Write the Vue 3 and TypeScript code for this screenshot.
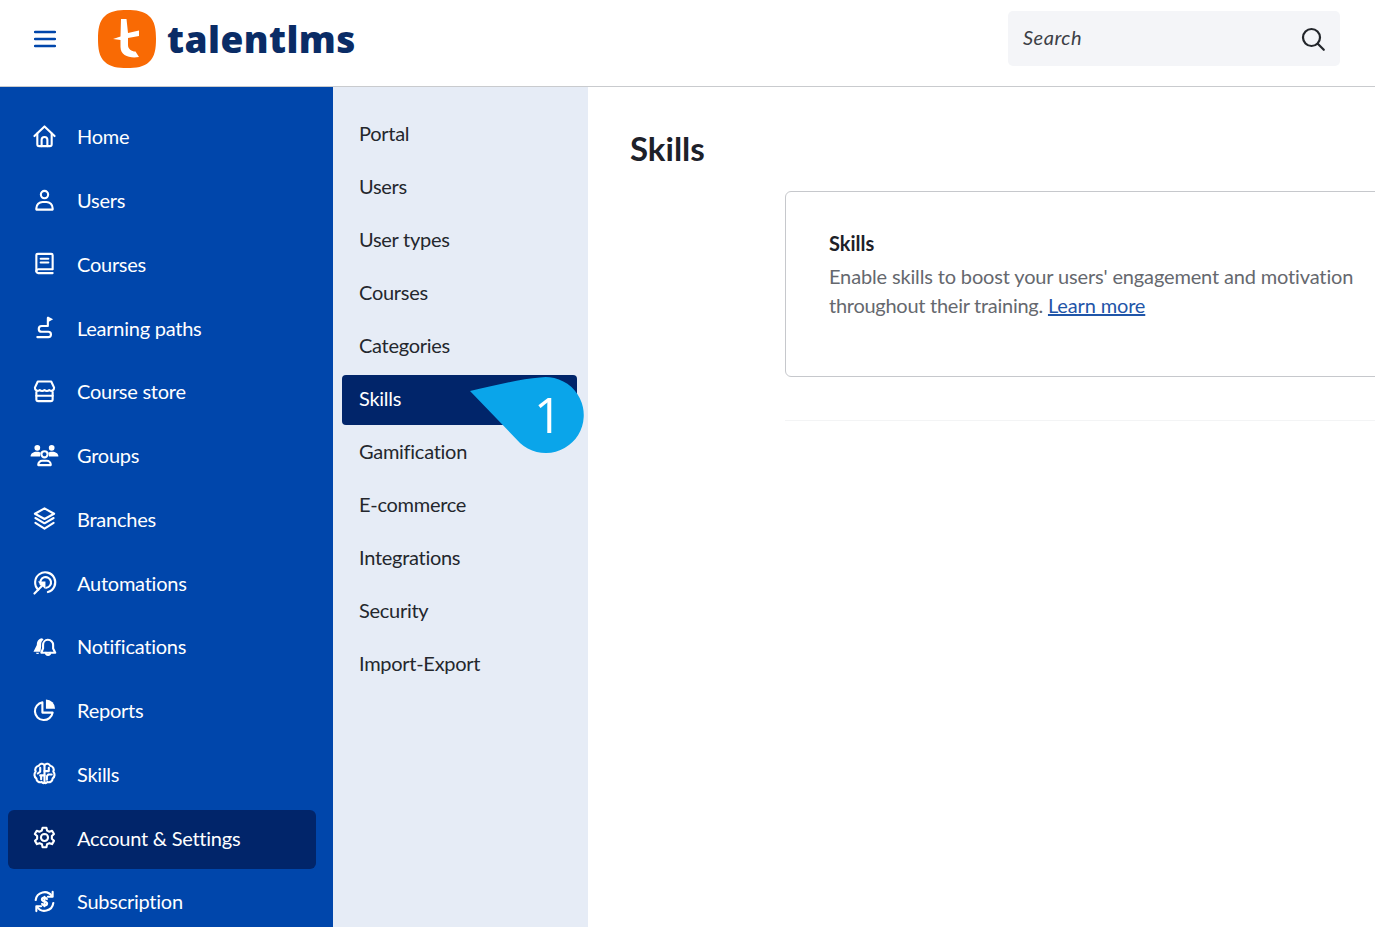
<script setup lang="ts">
interface NavItem { label: string; paths: string[]; fills?: string[]; active?: boolean }

const nav: NavItem[] = [
  { label: 'Home', paths: ['M1.5 11.5 12 1.5l10.5 10', 'M4.5 9v11a2 2 0 0 0 2 2h11a2 2 0 0 0 2-2V9', 'M9 22v-6.500a3 3 0 0 1 6 0V22'] },
  { label: 'Users', paths: ['M12 2a3.800 3.800 0 1 0 0 7.600A3.800 3.800 0 0 0 12 2Z', 'M3.500 21.500v-1.500a6.500 6.500 0 0 1 6.500-6.500h4a6.500 6.500 0 0 1 6.500 6.500v1.500Z'] },
  { label: 'Courses', paths: ['M20 18H6a2.200 2.200 0 0 0-2.500 2.200A1.800 1.800 0 0 0 5.300 22H20.500', 'M3.500 20V3.500A1.500 1.500 0 0 1 5 2h14a1.500 1.500 0 0 1 1.500 1.500V18', 'M8 7h8M8 11h8'] },
  { label: 'Learning paths', paths: ['M15.500 2v8.500H9a3 3 0 0 0 0 6h7a2.700 2.700 0 0 1 0 5.500H4.500'], fills: ['M15.500 0.500 21 3.500l-5.500 3Z'] },
  { label: 'Course store', paths: ['M5 1.500h14l3 6.500a3 3 0 0 1-5 2.500 3.500 3.500 0 0 1-5 0 3.500 3.500 0 0 1-5 0 3 3 0 0 1-5-2.500Z', 'M3.500 12.500v7.500a2 2 0 0 0 2 2h13a2 2 0 0 0 2-2v-7.500', 'M3.500 16.500h17'] },
  { label: 'Groups', paths: ['M12 7.500a3.200 3.200 0 1 0 0 6.400 3.200 3.200 0 0 0 0-6.400Z', 'M5.500 22v-.5a4 4 0 0 1 4-4h5a4 4 0 0 1 4 4v.5Z'], fills: ['M4.500 1a3 3 0 1 1 0 6 3 3 0 0 1 0-6Z', 'M19.500 1a3 3 0 1 1 0 6 3 3 0 0 1 0-6Z', 'M-2.500 13c0-3.500 3-5 6.500-5 1.800 0 3.300.4 4.200 1.200A5.500 5.500 0 0 0 7.400 13Z', 'M26.500 13c0-3.500-3-5-6.500-5-1.800 0-3.300.4-4.200 1.200A5.500 5.500 0 0 1 16.600 13Z'] },
  { label: 'Branches', paths: ['M12 1.500 22 7l-10 5.500L2 7Z', 'M2.500 11.500 12 17l9.500-5.500', 'M2.500 16.500 12 22.500l9.500-6'] },
  { label: 'Automations', paths: ['M5.500 19.500A10.500 10.500 0 1 1 15.500 22', 'M8 14a5.600 5.600 0 1 1 6 3.500', 'M1.500 23.500 9.500 15.500'], fills: ['M13 11v8l-8-8Z'] },
  { label: 'Notifications', paths: ['M15.500 5c-3 0-5 2.500-5 5.500V14l-1.800 4.500h14.500L21 14v-3.500c0-3-2.500-5.500-5.500-5.500Z', 'M13.500 18.500a2.200 2.200 0 0 0 4.400 0'], fills: ['M9.500 3.500C5.500 4 4 7 4 10.500L.5 17.500H7.800L8.500 12V9.500C8.500 7.500 9.500 6 11 5Z', 'M3 18.500h3.500a1.800 1.800 0 0 1-3.500 0Z'] },
  { label: 'Reports', paths: ['M9.800 3.500a9.300 9.300 0 1 0 10.700 10.700H9.800Z'], fills: ['M13.500 0.500a9.500 9.500 0 0 1 9.500 9.800h-9.500Z'] },
  { label: 'Skills', paths: ['M12 3C10 1 7 1.500 6 4 3 4.500 1.500 7.500 2.800 10 1 12 1 15.500 3.500 17 3.500 20 6.500 22 9 20.800 10 22 11 22.300 12 21.500', 'M12 3C14 1 17 1.500 18 4 21 4.500 22.500 7.500 21.200 10 23 12 23 15.500 20.500 17 20.500 20 17.500 22 15 20.800 14 22 13 22.300 12 21.500', 'M12 3v18.500', 'M7.500 6v4l-2.500 2M7.500 14H12M8.500 14v4M16.500 6v3.500H12M19.500 13h-3.500l-1.500 1.800v3.700'] },
  { label: 'Account & Settings', active: true, paths: ['M10 1.800h4l.7 3 2.400 1.200 2.800-1 2 3.400-2.200 2.100v2.900l2.200 2.100-2 3.400-2.800-1-2.400 1.200-.7 3h-4l-.7-3-2.400-1.200-2.800 1-2-3.400 2.200-2.100v-2.900L1.900 8.400l2-3.400 2.800 1 2.400-1.200Z', 'M12 8.300a3.700 3.700 0 1 0 0 7.400 3.700 3.700 0 0 0 0-7.400Z'] },
  { label: 'Subscription', paths: ['M2.800 10.500A9.300 9.300 0 0 1 19.800 6.500', 'M21.200 13.500A9.300 9.300 0 0 1 4.200 17.500', 'M20.500 2v5H15.500M3.500 22v-5H8.500', 'M14.500 9.500c-.5-.9-1.500-1.500-2.500-1.500-1.500 0-2.700.8-2.700 2 0 2.600 5.400 1.400 5.400 4 0 1.200-1.200 2-2.700 2-1 0-2-.6-2.500-1.500M12 7v10'] },
]

const sub: { label: string; active?: boolean }[] = [
  { label: 'Portal' }, { label: 'Users' }, { label: 'User types' }, { label: 'Courses' },
  { label: 'Categories' }, { label: 'Skills', active: true }, { label: 'Gamification' },
  { label: 'E-commerce' }, { label: 'Integrations' }, { label: 'Security' }, { label: 'Import-Export' },
]
</script>

<template>
  <div class="page">
    <header class="topbar">
      <div class="brand">
        <svg class="burger" viewBox="0 0 22 18" aria-hidden="true">
          <path d="M1 2h20M1 9h20M1 16h20" />
        </svg>
        <svg class="mark" viewBox="0 0 58 58" aria-hidden="true">
          <path class="mark-bg" d="M29 0C38 0 46 1 51 6 57 11 58 20 58 29 58 38 57 47 51 52 46 57 38 58 29 58 20 58 12 57 7 52 1 47 0 38 0 29 0 20 1 11 7 6 12 1 20 0 29 0Z" />
          <path class="mark-t" d="M23 9h5.500L30 23l11-2.500V26L30 28v7c0 4 3.500 6.500 7.500 6.500L41 47c-9 1.500-18.500-1-18.500-10v-7L15 29l7.500-2.500Z" />
        </svg>
        <span class="wordmark">talentlms</span>
      </div>
      <div class="search">
        <span class="search-label">Search</span>
        <svg class="search-icon" viewBox="0 0 24 24" aria-hidden="true">
          <circle cx="10.500" cy="10.500" r="8.500" />
          <path d="m16.800 16.800 6 6" />
        </svg>
      </div>
    </header>

    <div class="body">
      <nav class="side">
        <a v-for="item in nav" :key="item.label" class="side-item" :class="{ on: item.active }">
          <svg class="side-icon" viewBox="0 0 24 24" aria-hidden="true">
            <path v-for="d in item.paths" :key="d" :d="d" />
            <path v-for="d in item.fills ?? []" :key="d" :d="d" class="solid" />
          </svg>
          <span>{{ item.label }}</span>
        </a>
      </nav>

      <aside class="subnav">
        <a v-for="item in sub" :key="item.label" class="sub-item" :class="{ on: item.active }">{{ item.label }}</a>
        <div class="callout">
          <svg viewBox="0 0 116 80" aria-hidden="true">
            <path d="M0 15C22 10 50 3 70 1.500A38 38 0 1 1 50 67Z" />
          </svg>
          <span class="callout-num">1</span>
        </div>
      </aside>

      <main class="content">
        <h1 class="title">Skills</h1>
        <section class="card">
          <h2 class="card-title">Skills</h2>
          <p class="card-text">Enable skills to boost your users' engagement and motivation<br /><span class="tight">throughout their training.</span> <a class="link">Learn more</a></p>
        </section>
        <div class="rule"></div>
      </main>
    </div>
  </div>
</template>

<style>
html, body { margin: 0; overflow: hidden; background: #fff; }
</style>

<style scoped>
.page {
  width: 1375px;
  height: 927px;
  overflow: hidden;
  display: flex;
  flex-direction: column;
  font-family: Lato, "Open Sans", sans-serif;
  color: #1d2129;
}
.topbar {
  height: 78px;
  flex: none;
  border-bottom: 1px solid #c9cbce;
  display: flex;
  align-items: center;
  justify-content: space-between;
  padding: 0 35px 8px 34px;
}
.brand { display: flex; align-items: center; }
.burger { width: 22px; height: 18px; margin-right: 42px; }
.burger path { fill: none; stroke: #0046ab; stroke-width: 2.4; stroke-linecap: round; }
.mark { width: 58px; height: 58px; margin-right: 11px; }
.mark-bg { fill: #f96a04; }
.mark-t { fill: #fff; }
.wordmark {
  font-family: "Open Sans", Lato, sans-serif;
  font-weight: 800;
  font-size: 37px;
  line-height: 44px;
  color: #0a2c66;
  letter-spacing: 0.45px;
}
.search {
  width: 332px;
  height: 55px;
  margin-top: -1px;
  box-sizing: border-box;
  padding: 0 15px;
  background: #f4f5f8;
  border-radius: 5px;
  display: flex;
  align-items: center;
  justify-content: space-between;
}
.search-label { font-style: italic; font-size: 20px; color: #3c3f46; letter-spacing: .5px; margin-bottom: 4px; }
.search-icon { width: 24px; height: 24px; fill: none; stroke: #23262b; stroke-width: 2.2; stroke-linecap: round; overflow: visible; }

.body { flex: 1; display: flex; min-height: 0; }

.side {
  width: 333px;
  flex: none;
  box-sizing: border-box;
  background: #0046ab;
  padding: 21.5px 17px 0 8px;
  display: flex;
  flex-direction: column;
  gap: 4.77px;
}
.side-item {
  height: 59px;
  flex: none;
  box-sizing: border-box;
  padding: 0 0 3.5px 25px;
  display: flex;
  align-items: center;
  border-radius: 6px;
  color: #fff;
  font-size: 20px;
  letter-spacing: -.25px;
}
.side-item.on { background: #01256a; }
.side-icon {
  width: 23px;
  height: 23px;
  margin-right: 21px;
  fill: none;
  stroke: #fff;
  stroke-width: 2.2;
  stroke-linecap: round;
  stroke-linejoin: round;
  overflow: visible;
  flex: none;
}
.side-icon .solid { fill: #fff; stroke: none; }

.subnav {
  width: 255px;
  flex: none;
  box-sizing: border-box;
  background: #e6ecf6;
  padding: 22.5px 11px 0 9px;
  display: flex;
  flex-direction: column;
  gap: 3.1px;
  position: relative;
}
.sub-item {
  height: 50px;
  flex: none;
  box-sizing: border-box;
  padding: 0 0 4px 17px;
  display: flex;
  align-items: center;
  border-radius: 4px;
  font-size: 20px;
  letter-spacing: -.28px;
  color: #24272d;
}
.sub-item.on { background: #01256a; color: #fff; }
.callout { position: absolute; left: 137px; top: 289px; width: 116px; height: 80px; }
.callout svg { width: 116px; height: 80px; display: block; }
.callout svg path { fill: #0aa5ea; }
.callout-num {
  position: absolute;
  left: 63px;
  top: 10px;
  width: 30px;
  text-align: center;
  color: #fff;
  font-family: "Open Sans", sans-serif;
  font-size: 49px;
  line-height: 56px;
}

.content { flex: 1; min-width: 0; padding: 41px 0 0 42px; overflow: hidden; }
.title { margin: 0; font-size: 33px; line-height: 40px; font-weight: 700; color: #1d2129; }
.card {
  margin: 23px 0 0 155px;
  width: 700px;
  height: 186px;
  box-sizing: border-box;
  border: 1px solid #c6c8cc;
  border-radius: 6px;
  padding: 38px 43px 0;
}
.card-title { margin: 0; font-size: 20px; line-height: 26px; font-weight: 700; color: #1d2129; }
.card-text { margin: 6px 0 0; font-size: 20px; line-height: 29px; color: #65686e; letter-spacing: -.15px; white-space: nowrap; }
.tight { letter-spacing: -.27px; }
.link { color: #1f55a8; text-decoration: underline; }
.rule { margin: 43px 0 0 155px; width: 700px; height: 1px; background: #f3f4f5; }
</style>
